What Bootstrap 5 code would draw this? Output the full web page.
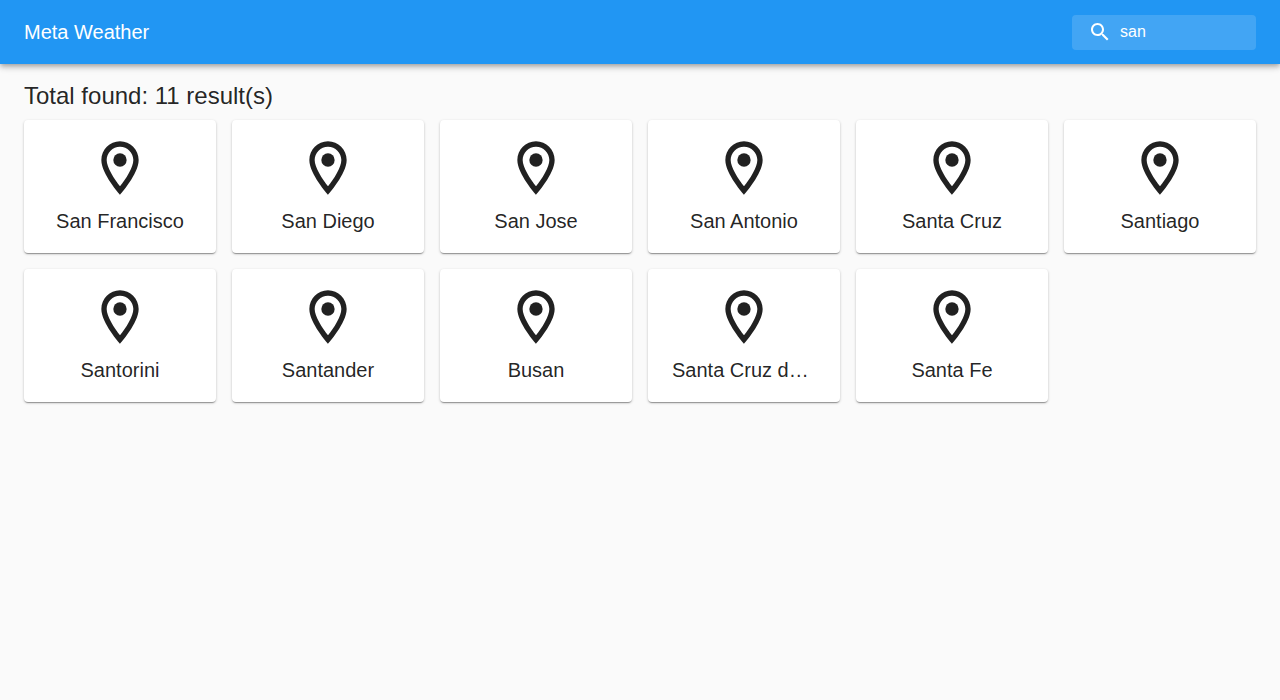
<!DOCTYPE html>
<html lang="en">
<head>
<meta charset="utf-8">
<meta name="viewport" content="width=device-width, initial-scale=1">
<title>Meta Weather</title>
<link href="https://cdn.jsdelivr.net/npm/bootstrap@5.3.0/dist/css/bootstrap.min.css" rel="stylesheet">
<style>
body{font-family:"Liberation Sans",Arial,sans-serif;background:#fafafa;color:rgba(0,0,0,.87)}
.app-bar{background:#2196f3;min-height:64px;box-shadow:0 2px 4px -1px rgba(0,0,0,.2),0 4px 5px 0 rgba(0,0,0,.14),0 1px 10px 0 rgba(0,0,0,.12)}
.app-title{font-size:20px;line-height:32px}
.search-box{background:rgba(255,255,255,.15);border-radius:4px;width:184px;padding:5px 8px 6px 16px}
.search-box:hover{background:rgba(255,255,255,.25)}
.search-box svg{width:24px;height:24px;fill:currentColor}
.search-box input{font-size:16px;line-height:20px;outline:0;min-width:0}
.found{font-size:24px;line-height:32px}
.place-card{border:0;border-radius:4px;color:inherit;padding:16px 24px;box-shadow:0 2px 1px -1px rgba(0,0,0,.2),0 1px 1px 0 rgba(0,0,0,.14),0 1px 3px 0 rgba(0,0,0,.2)}
.place-card svg{width:64px;height:64px;fill:currentColor}
.place-name{font-size:20px;line-height:32px;margin-top:5px}
</style>
</head>
<body>
<header class="app-bar d-flex align-items-center justify-content-between px-4 text-white">
<a href="#" class="app-title text-white text-decoration-none">Meta Weather</a>
<form class="search-box d-flex align-items-center gap-2" role="search">
<svg class="flex-shrink-0" viewBox="0 0 24 24" aria-hidden="true"><path d="M15.500 14h-.79l-.28-.27C15.410 12.590 16 11.110 16 9.500 16 5.910 13.090 3 9.500 3S3 5.910 3 9.500 5.910 16 9.500 16c1.610 0 3.090-.59 4.230-1.570l.27.28v.79l5 4.990L20.490 19l-4.990-5zm-6 0C7.010 14 5 11.990 5 9.500S7.010 5 9.500 5 14 7.010 14 9.500 11.990 14 9.500 14z"/></svg>
<input type="text" class="bg-transparent border-0 p-0 text-white flex-grow-1" aria-label="Search" value="san">
</form>
</header>
<main class="px-4 py-3">
<h1 class="found fw-normal mb-2">Total found: 11 result(s)</h1>
<div class="row row-cols-2 row-cols-md-4 row-cols-lg-6 g-3" id="places"></div>
</main>
<template id="place">
<div class="col"><a href="#" class="place-card card text-center text-decoration-none">
<svg class="mx-auto" viewBox="0 0 24 24" aria-hidden="true"><path d="M12 2C8.130 2 5 5.130 5 9c0 5.250 7 13 7 13s7-7.750 7-13c0-3.870-3.130-7-7-7zM7 9c0-2.760 2.240-5 5-5s5 2.240 5 5c0 2.880-2.880 7.190-5 9.880C9.920 16.210 7 11.850 7 9z"/><circle cx="12" cy="9" r="2.500"/></svg>
<span class="place-name text-truncate"></span>
</a></div>
</template>
<script>
const names=["San Francisco","San Diego","San Jose","San Antonio","Santa Cruz","Santiago","Santorini","Santander","Busan","Santa Cruz de Tenerife","Santa Fe"];
const tpl=document.getElementById("place");
names.forEach(n=>{
  const c=tpl.content.cloneNode(true);
  c.querySelector(".place-name").textContent=n;
  document.getElementById("places").append(c);
});
</script>
<script src="https://cdn.jsdelivr.net/npm/bootstrap@5.3.0/dist/js/bootstrap.bundle.min.js"></script>
</body>
</html>
